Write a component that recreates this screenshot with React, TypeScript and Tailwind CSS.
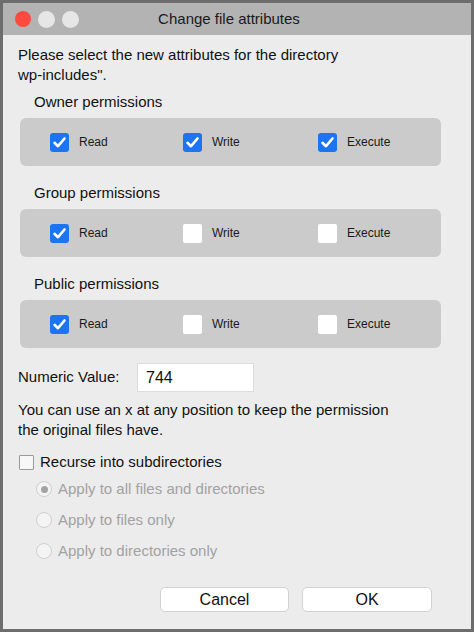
import React from "react";

const font = { fontFamily: '"Liberation Sans", Arial, sans-serif' };

function Check({ checked }: { checked: boolean }) {
  if (checked) {
    return (
      <div className="w-[19px] h-[19px] rounded-[3px] bg-[#1d74f2] flex items-center justify-center shrink-0">
        <svg width="15" height="15" viewBox="0 0 15 15">
          <path d="M2.5 7.8 L6 11.2 L12.5 3.5" fill="none" stroke="white" strokeWidth="2.6" strokeLinecap="round" strokeLinejoin="round" />
        </svg>
      </div>
    );
  }
  return <div className="w-[19px] h-[19px] rounded-[2px] bg-white shrink-0" />;
}

function Item({ checked, label, w }: { checked: boolean; label: string; w?: string }) {
  return (
    <div className={`flex items-center ${w ?? ""}`}>
      <Check checked={checked} />
      <span className="ml-[10px] text-[12px] text-[#1a1a1a]">{label}</span>
    </div>
  );
}

function Group({ title, r, w, x }: { title: string; r: boolean; w: boolean; x: boolean }) {
  return (
    <>
      <div className="ml-[16px] text-[15px] leading-[20px] text-[#111]">{title}</div>
      <div className="mt-[6px] ml-[2px] w-[421px] h-[48px] rounded-[6px] bg-[#cbcbcb] flex items-center pl-[30px]">
        <Item checked={r} label="Read" w="w-[133px]" />
        <Item checked={w} label="Write" w="w-[135px]" />
        <Item checked={x} label="Execute" />
      </div>
    </>
  );
}

function Radio({ on, label }: { on: boolean; label: string }) {
  return (
    <div className="flex items-center h-[20px] ml-[18px]">
      <div className="w-[16px] h-[16px] rounded-full border border-[#cfcfcf] bg-[#f4f4f4] flex items-center justify-center">
        {on && <div className="w-[7px] h-[7px] rounded-full bg-[#a3a3a3]" />}
      </div>
      <span className="ml-[6px] text-[15px] text-[#a2a2a2]">{label}</span>
    </div>
  );
}

export default function App() {
  return (
    <div style={font} className="w-[474px] h-[632px] border-[3px] border-[#6d6d6d] bg-[#ececec] flex flex-col overflow-hidden">
      <div className="h-[32px] bg-[#b3b3b3] relative flex items-center shrink-0">
        <div className="flex items-center gap-[7px] ml-[12px]">
          <div className="w-[16px] h-[16px] rounded-full bg-[#fd4a40]" />
          <div className="w-[17px] h-[17px] rounded-full bg-[#e6e6e6]" />
          <div className="w-[17px] h-[17px] rounded-full bg-[#e6e6e6]" />
        </div>
        <div className="absolute inset-0 flex items-center justify-center text-[15px] text-[#1a1a1a] pr-[16px]">
          Change file attributes
        </div>
      </div>
      <div className="flex flex-col pl-[15px] pt-[10px]">
        <div className="text-[15px] leading-[20px] text-[#111]">
          Please select the new attributes for the directory
          <br />
          wp-includes".
        </div>
        <div className="h-[7px]" />
        <Group title="Owner permissions" r w x />
        <div className="h-[17px]" />
        <Group title="Group permissions" r w={false} x={false} />
        <div className="h-[17px]" />
        <Group title="Public permissions" r w={false} x={false} />
        <div className="flex items-center mt-[15px]">
          <div className="w-[119px] text-[15px] text-[#111]">Numeric Value:</div>
          <div className="w-[117px] h-[29px] bg-white border border-[#dcdcdc] flex items-center pl-[8px] text-[16px] text-[#111]">
            744
          </div>
        </div>
        <div className="mt-[8px] text-[15px] leading-[19.5px] text-[#111]">
          You can use an x at any position to keep the permission
          <br />
          the original files have.
        </div>
        <div className="mt-[13px] flex items-center h-[20px]">
          <div className="ml-[1px] w-[15px] h-[15px] border border-[#9a9a9a] bg-[#f7f7f7] rounded-[1px]" />
          <span className="ml-[6px] text-[15px] text-[#111]">Recurse into subdirectories</span>
        </div>
        <div className="flex flex-col gap-[11px] mt-[7px]">
          <Radio on label="Apply to all files and directories" />
          <Radio on={false} label="Apply to files only" />
          <Radio on={false} label="Apply to directories only" />
        </div>
        <div className="flex justify-end gap-[13px] mt-[26px] mr-[39px]">
          <div className="w-[129px] h-[25px] bg-white border border-[#d2d2d2] rounded-[5px] flex items-center justify-center text-[16px] text-[#111]">
            Cancel
          </div>
          <div className="w-[130px] h-[25px] bg-white border border-[#d2d2d2] rounded-[5px] flex items-center justify-center text-[16px] text-[#111]">
            OK
          </div>
        </div>
      </div>
    </div>
  );
}
